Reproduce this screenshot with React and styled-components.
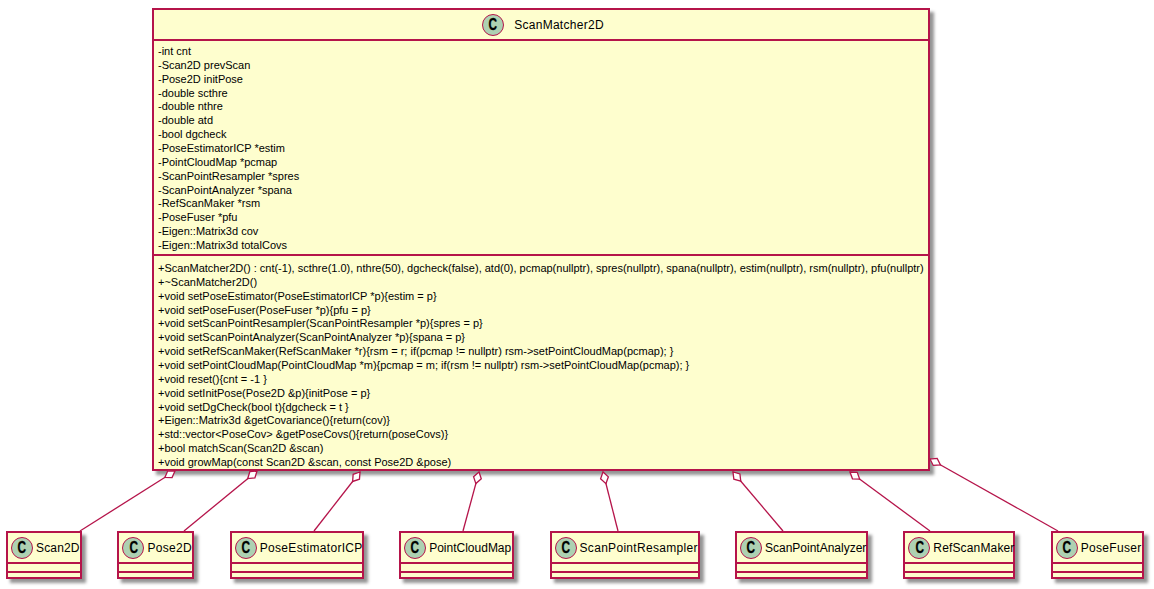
import React from 'react'
import styled, { createGlobalStyle } from 'styled-components'

const LINE = '#B5144A'
const FILL = '#FEFECE'

const GlobalStyle = createGlobalStyle`
    html, body {
        margin: 0;
        padding: 0;
        background: #fff;
    }
    body {
        font-family: "Liberation Sans", Arial, sans-serif;
        color: #000;
    }
`

const Diagram = styled.div`
    position: relative;
    width: 1154px;
    height: 589px;
    overflow: hidden;
    padding: 8px 0 0 6px;
    box-sizing: border-box;
`

const Edges = styled.svg`
    position: absolute;
    left: 0;
    top: 0;
    z-index: 2;
`

const MainClass = styled.div`
    width: 778px;
    height: 463px;
    margin-left: 146px;
    box-sizing: border-box;
    background: ${FILL};
    border: 2px solid ${LINE};
    box-shadow: 4px 4px 3px rgba(0, 0, 0, 0.42);
    display: flex;
    flex-direction: column;
`

const MainHeader = styled.div`
    height: 31px;
    box-sizing: border-box;
    flex: none;
    display: flex;
    align-items: center;
    justify-content: center;
    gap: 10px;
    padding-left: 4px;
    border-bottom: 2px solid ${LINE};
`

const Spot = styled.span`
    width: 20px;
    height: 20px;
    flex: none;
    border: 1px solid ${LINE};
    border-radius: 50%;
    background: #ADD1B2;
    display: flex;
    align-items: center;
    justify-content: center;
    font-size: 16px;
    font-weight: bold;
`

const SpotLetter = styled.span`
    display: block;
    transform: scaleX(0.74);
    -webkit-text-stroke: 0.3px #000;
`

const MainTitle = styled.span`
    font-size: 12px;
    letter-spacing: 0.28px;
`

const Section = styled.div`
    padding: ${(p) => p.$top}px 0 0 4px;
    height: ${(p) => p.$height}px;
    box-sizing: border-box;
    flex: none;
    border-bottom: ${(p) => (p.$divided ? `2px solid ${LINE}` : 'none')};
`

const Member = styled.div`
    height: 13.86px;
    line-height: 14px;
    font-size: 11px;
    white-space: nowrap;
`

const ClassRow = styled.div`
    display: flex;
    gap: 35.4px;
    margin-top: 60px;
`

const SmallClass = styled.div`
    width: ${(p) => p.$width}px;
    height: 48px;
    flex: none;
    box-sizing: border-box;
    background: ${FILL};
    border: 2px solid ${LINE};
    box-shadow: 4px 4px 3px rgba(0, 0, 0, 0.42);
`

const SmallHeader = styled.div`
    height: 31px;
    box-sizing: border-box;
    display: flex;
    align-items: center;
    gap: 3px;
    padding-left: 3px;
    border-bottom: 2px solid ${LINE};
`

const SmallName = styled.span`
    font-size: 12px;
    letter-spacing: ${(p) => p.$tracking}px;
    white-space: nowrap;
`

const EmptyBar = styled.div`
    height: 8px;
    box-sizing: content-box;
    border-bottom: 2px solid ${LINE};
    margin-top: -1px;
`

const attributes = [
    '-int cnt',
    '-Scan2D prevScan',
    '-Pose2D initPose',
    '-double scthre',
    '-double nthre',
    '-double atd',
    '-bool dgcheck',
    '-PoseEstimatorICP *estim',
    '-PointCloudMap *pcmap',
    '-ScanPointResampler *spres',
    '-ScanPointAnalyzer *spana',
    '-RefScanMaker *rsm',
    '-PoseFuser *pfu',
    '-Eigen::Matrix3d cov',
    '-Eigen::Matrix3d totalCovs',
]

const methods = [
    '+ScanMatcher2D() : cnt(-1), scthre(1.0), nthre(50), dgcheck(false), atd(0), pcmap(nullptr), spres(nullptr), spana(nullptr), estim(nullptr), rsm(nullptr), pfu(nullptr)',
    '+~ScanMatcher2D()',
    '+void setPoseEstimator(PoseEstimatorICP *p){estim = p}',
    '+void setPoseFuser(PoseFuser *p){pfu = p}',
    '+void setScanPointResampler(ScanPointResampler *p){spres = p}',
    '+void setScanPointAnalyzer(ScanPointAnalyzer *p){spana = p}',
    '+void setRefScanMaker(RefScanMaker *r){rsm = r; if(pcmap != nullptr) rsm->setPointCloudMap(pcmap); }',
    '+void setPointCloudMap(PointCloudMap *m){pcmap = m; if(rsm != nullptr) rsm->setPointCloudMap(pcmap); }',
    '+void reset(){cnt = -1 }',
    '+void setInitPose(Pose2D &p){initPose = p}',
    '+void setDgCheck(bool t){dgcheck = t }',
    '+Eigen::Matrix3d &getCovariance(){return(cov)}',
    '+std::vector<PoseCov> &getPoseCovs(){return(poseCovs)}',
    '+bool matchScan(Scan2D &scan)',
    '+void growMap(const Scan2D &scan, const Pose2D &pose)',
]

const parts = [
    { name: 'Scan2D', width: 76, tracking: 0.15 },
    { name: 'Pose2D', width: 77, tracking: 0.3 },
    { name: 'PoseEstimatorICP', width: 134, tracking: 0.3 },
    { name: 'PointCloudMap', width: 115, tracking: 0 },
    { name: 'ScanPointResampler', width: 150, tracking: 0.3 },
    { name: 'ScanPointAnalyzer', width: 133, tracking: 0 },
    { name: 'RefScanMaker', width: 112, tracking: 0.15 },
    { name: 'PoseFuser', width: 93, tracking: 0.3 },
]

// diamond tip on the main class, far end on the part
const links = [
    [175, 471, 80, 531],
    [257, 471, 184, 531],
    [360, 472, 314, 531],
    [479, 472, 463, 531],
    [603, 472, 618, 531],
    [733, 472, 783, 531],
    [850, 472, 930, 531],
    [930, 459, 1058, 531],
]

function diamond([x1, y1, x2, y2]) {
    const len = Math.hypot(x2 - x1, y2 - y1)
    const ux = (x2 - x1) / len
    const uy = (y2 - y1) / len
    const mid = [x1 + ux * 6, y1 + uy * 6]
    const end = [x1 + ux * 12, y1 + uy * 12]
    const side = 4
    return [
        [x1, y1],
        [mid[0] - uy * side, mid[1] + ux * side],
        end,
        [mid[0] + uy * side, mid[1] - ux * side],
    ]
        .map((p) => p.join(','))
        .join(' ')
}

export default function App() {
    return (
        <Diagram>
            <GlobalStyle />
            <MainClass>
                <MainHeader>
                    <Spot><SpotLetter>C</SpotLetter></Spot>
                    <MainTitle>ScanMatcher2D</MainTitle>
                </MainHeader>
                <Section $height={215} $top={3} $divided>
                    {attributes.map((text) => (
                        <Member key={text}>{text}</Member>
                    ))}
                </Section>
                <Section $height={213} $top={5}>
                    {methods.map((text) => (
                        <Member key={text}>{text}</Member>
                    ))}
                </Section>
            </MainClass>
            <ClassRow>
                {parts.map((part) => (
                    <SmallClass key={part.name} $width={part.width}>
                        <SmallHeader>
                            <Spot><SpotLetter>C</SpotLetter></Spot>
                            <SmallName $tracking={part.tracking}>{part.name}</SmallName>
                        </SmallHeader>
                        <EmptyBar />
                    </SmallClass>
                ))}
            </ClassRow>
            <Edges width="1154" height="589" viewBox="0 0 1154 589">
                {links.map((link) => (
                    <g key={link.join('-')} stroke={LINE} strokeWidth="1.3">
                        <line x1={link[0]} y1={link[1]} x2={link[2]} y2={link[3]} />
                        <polygon points={diamond(link)} fill="#fff" />
                    </g>
                ))}
            </Edges>
        </Diagram>
    )
}
